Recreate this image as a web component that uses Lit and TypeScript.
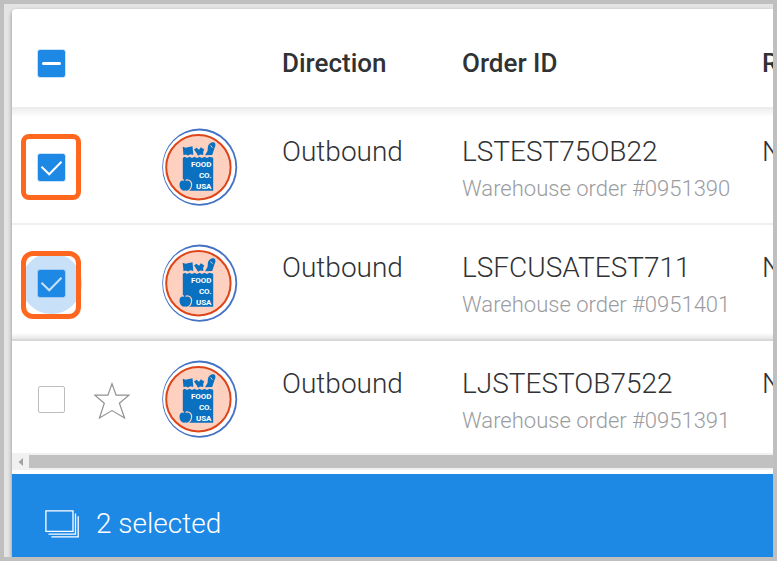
import { LitElement, html, css, svg, nothing } from "lit";
import { customElement, property, state } from "lit/decorators.js";
import { classMap } from "lit/directives/class-map.js";

interface Order {
  direction: string;
  id: string;
  note: string;
  next: string;
  checked: boolean;
  mark?: "small" | "large";
}

@customElement("check-box")
class CheckBox extends LitElement {
  @property({ type: Boolean }) checked = false;
  @property({ type: Boolean }) partial = false;
  @property({ type: Boolean }) ripple = false;
  @property() name = "";

  static styles = css`
    :host {
      display: block;
      width: 27px;
      height: 27px;
    }
    .box {
      position: relative;
      display: grid;
      width: 27px;
      height: 27px;
    }
    .ripple::before {
      content: "";
      position: absolute;
      inset: -17px;
      border-radius: 50%;
      background: #c8e1f9;
    }
    .input {
      grid-area: 1 / 1;
      position: relative;
      appearance: none;
      width: 27px;
      height: 27px;
      margin: 0;
      border: 1px solid #bdbdbd;
      border-radius: 2px;
      background: #fff;
    }
    .filled {
      border-color: #1e88e5;
      background: #1e88e5;
      box-shadow: 0 0 0 1px rgba(30, 136, 229, 0.25);
    }
    .glyph {
      grid-area: 1 / 1;
      position: relative;
      pointer-events: none;
      fill: none;
      stroke: #fff;
      stroke-width: 2;
    }
    .ripple .glyph {
      stroke: #c8e1f9;
    }
  `;

  render() {
    const filled = this.checked || this.partial;
    return html`<label class=${classMap({ box: true, ripple: this.ripple })}>
      <input
        type="checkbox"
        class=${classMap({ input: true, filled })}
        aria-label=${this.name}
        .checked=${this.checked}
        .indeterminate=${this.partial}
      />
      ${filled
        ? html`<svg class="glyph" width="27" height="27" viewBox="0 0 27 27">
            ${this.partial
              ? svg`<path d="M5.500 13.500H21.500" stroke-width="3" stroke-linecap="round" />`
              : svg`<path d="M3.500 12.800L11.200 20.300L23.500 7.700" />`}
          </svg>`
        : nothing}
    </label>`;
  }
}

@customElement("food-logo")
class FoodLogo extends LitElement {
  static styles = css`
    :host {
      display: block;
    }
    .logo {
      display: block;
    }
    .word {
      font: 700 8px Roboto, sans-serif;
      fill: #fff;
      text-anchor: end;
    }
  `;

  render() {
    return html`<svg class="logo" width="76" height="79" viewBox="0 0 76 79" role="img" aria-label="Food Co. USA">
      <ellipse cx="37.700" cy="39.200" rx="37.500" ry="38.600" fill="#4472c4" />
      <ellipse cx="37.200" cy="39.200" rx="36.200" ry="36.800" fill="#fff" />
      <circle cx="36.400" cy="39.200" r="32.200" fill="#fdd0c0" stroke="#dd4519" stroke-width="2" />
      <g fill="#0a70c0">
        <path d="M20.700 18.700L23.500 19.700L30.500 18.300L31.300 26.900L28.500 26.300L26 27.400L23.800 26.500L21.500 27.200Z" />
        <path d="M32 21.500L34.500 19.700L37 21.700L38.800 19.300L42.300 21.500L41.200 23.700L41.300 27L38.500 26.500L36 27.800L34.300 24.700Z" />
        <path d="M43 27.200L45.500 23L46 18C47.600 14 52 13 53.300 15.700C54 18.500 52.300 19.700 51.800 22.200L50.200 27Z" />
        <path d="M20.800 29.700L23 28.700L25 30L27.500 28.700L30 30L32.500 28.700L35 30L37.500 28.700L40 30L42.500 28.700L45 30L47.500 28.700L51.200 29.700V62.800H20.800Z" />
      </g>
      <path d="M48.500 17.500L50.500 19.700" stroke="#fdd0c0" stroke-width="1" />
      <path
        d="M23 53.300C20.500 51.500 17.300 53.200 17.500 56.700C17.700 60.200 19.800 63.300 23.200 62.500C26.600 63.300 28.800 60.200 29 56.700C29.200 53.200 25.500 51.500 23 53.300Z"
        fill="#0a70c0"
        stroke="#fdd0c0"
        stroke-width="2.400"
        paint-order="stroke"
      />
      <path d="M22.800 53.700C22.500 51.700 23.200 50 24.800 49.200" fill="none" stroke="#0a70c0" stroke-width="1.400" />
      <text class="word" x="49.500" y="38.600">FOOD</text>
      <text class="word" x="49.500" y="49.600">CO.</text>
      <text class="word" x="49.500" y="60.600">USA</text>
    </svg>`;
  }
}

@customElement("app-root")
class AppRoot extends LitElement {
  @state() private orders: Order[] = [
    { direction: "Outbound", id: "LSTEST75OB22", note: "Warehouse order #0951390", next: "N", checked: true, mark: "small" },
    { direction: "Outbound", id: "LSFCUSATEST711", note: "Warehouse order #0951401", next: "N", checked: true, mark: "large" },
    { direction: "Outbound", id: "LJSTESTOB7522", note: "Warehouse order #0951391", next: "N", checked: false },
  ];

  static styles = css`
    :host {
      display: flex;
      box-sizing: border-box;
      min-height: 100vh;
      border: 4px solid #bfbfbf;
      padding: 5px 0 0 8px;
      background: #e4e4e4;
      overflow: hidden;
      font-family: Roboto, sans-serif;
      font-weight: 300;
      color: #303234;
    }
    .card {
      flex: 1;
      min-width: 0;
      display: flex;
      flex-direction: column;
      background: #fff;
      border-top-left-radius: 4px;
      box-shadow: 0 2px 4px rgba(0, 0, 0, 0.4);
    }
    .viewport {
      overflow: hidden;
    }
    .orders {
      table-layout: fixed;
      width: 1050px;
      border-spacing: 0;
    }
    .c-check {
      width: 82px;
    }
    .c-star {
      width: 68px;
    }
    .c-logo {
      width: 120px;
    }
    .c-direction {
      width: 180px;
    }
    .c-order,
    .c-more {
      width: 300px;
    }
    th,
    td {
      padding: 0;
      text-align: left;
      vertical-align: top;
    }
    .head {
      height: 98px;
    }
    .head th {
      padding-top: 36px;
      font-size: 26px;
      line-height: 36px;
      font-weight: 500;
    }
    .head .check {
      padding: 41px 0 0 26px;
    }
    .row {
      height: 116px;
      background: linear-gradient(#f0f0f0, #f0f0f0) top / 100% 2px no-repeat;
    }
    .row:first-child {
      background: linear-gradient(#ebebeb, #fff) top / 100% 10px no-repeat;
    }
    .row:nth-child(2) {
      background:
        linear-gradient(#f0f0f0, #f0f0f0) top / 100% 2px no-repeat,
        linear-gradient(#fff, #e6e6e6) bottom / 100% 6px no-repeat;
    }
    .row:last-child {
      height: 114px;
      background: linear-gradient(#d8d8d8, #d8d8d8) top / 100% 2px no-repeat;
    }
    .row td {
      padding-top: 27px;
      font-size: 28px;
      line-height: 36px;
    }
    .row .check {
      position: relative;
      padding: 47px 0 0 26px;
    }
    .row .star-cell {
      padding-top: 43px;
    }
    .row .logo-cell {
      padding-top: 21px;
    }
    .note {
      font-size: 22px;
      line-height: 38px;
      color: #9a9c9f;
    }
    .mark {
      position: absolute;
      left: 9px;
      box-sizing: border-box;
      width: 60px;
      border: 5px solid #ff671f;
      pointer-events: none;
    }
    .small {
      top: 27px;
      height: 66px;
      border-radius: 8px;
    }
    .large {
      top: 28px;
      height: 68px;
      border-radius: 12px;
    }
    .star {
      display: block;
      border: 0;
      padding: 0;
      background: none;
    }
    .icon {
      display: block;
      fill: none;
    }
    .scroll {
      display: flex;
      align-items: center;
      height: 17px;
      margin-bottom: 4px;
      background: #f1f1f1;
    }
    .arrow {
      display: grid;
      place-items: center;
      width: 17px;
      height: 17px;
      border: 0;
      padding: 0;
      background: none;
    }
    .thumb {
      flex: 1;
      height: 13px;
      background: #c1c1c1;
    }
    .bar {
      flex: 1;
      display: flex;
      align-items: flex-start;
      gap: 17px;
      padding: 32px 33px 15px;
      background: #1e88e5;
      color: #fff;
      font-size: 28px;
      line-height: 36px;
    }
    .stack {
      padding-top: 4px;
    }
  `;

  private renderRow(order: Order) {
    return html`<tr class="row">
      <td class="check">
        <check-box name=${order.id} ?checked=${order.checked} ?ripple=${order.mark === "large"}></check-box>
        ${order.mark ? html`<div class=${classMap({ mark: true, [order.mark]: true })}></div>` : nothing}
      </td>
      <td class="star-cell">
        ${order.checked
          ? nothing
          : html`<button class="star" aria-label="Favourite">
              <svg class="icon" width="36" height="38" viewBox="0 0 36 38" stroke="#8f9193" stroke-width="1.200">
                <path d="M18 1.700L22.100 13.200H34.900L25.400 21.200L30.500 36L18 28.600L5.500 36L10.300 21.200L.8 13.200H13.900Z" />
              </svg>
            </button>`}
      </td>
      <td class="logo-cell"><food-logo></food-logo></td>
      <td>${order.direction}</td>
      <td>
        ${order.id}
        <div class="note">${order.note}</div>
      </td>
      <td>${order.next}</td>
    </tr>`;
  }

  render() {
    const selected = this.orders.filter((o) => o.checked).length;
    return html`<main class="card">
      <div class="viewport">
        <table class="orders">
          <colgroup>
            <col class="c-check" />
            <col class="c-star" />
            <col class="c-logo" />
            <col class="c-direction" />
            <col class="c-order" />
            <col class="c-more" />
          </colgroup>
          <thead>
            <tr class="head">
              <th class="check"><check-box name="All orders" partial></check-box></th>
              <th></th>
              <th></th>
              <th>Direction</th>
              <th>Order ID</th>
              <th>R</th>
            </tr>
          </thead>
          <tbody>
            ${this.orders.map((o) => this.renderRow(o))}
          </tbody>
        </table>
      </div>
      <div class="scroll">
        <button class="arrow" aria-label="Scroll left">
          <svg class="icon" width="5" height="8" viewBox="0 0 5 8"><path d="M5 0V8L.5 4Z" fill="#a3a3a3" /></svg>
        </button>
        <div class="thumb"></div>
      </div>
      <footer class="bar">
        <div class="stack">
          <svg class="icon" width="34" height="28" viewBox="0 0 34 28" stroke="#fff" stroke-width="1.300">
            <path d="M.9 .9H28V21.300H.9Z" />
            <path d="M30.500 3.500V24.200H3.500M33.200 6.300V26.900H6.300" />
          </svg>
        </div>
        <span>${selected} selected</span>
      </footer>
    </main>`;
  }
}
